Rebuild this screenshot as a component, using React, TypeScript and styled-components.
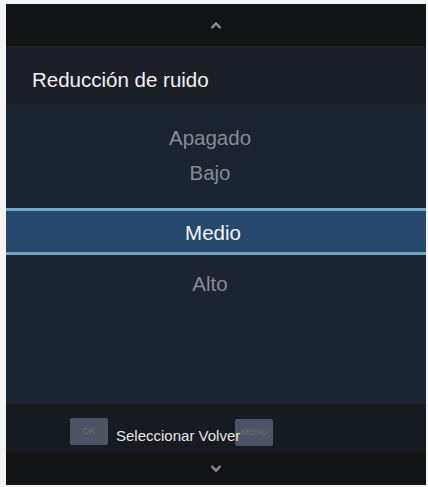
import * as React from "react"
import styled, { createGlobalStyle } from "styled-components"

const Global = createGlobalStyle`
    html, body {
        margin: 0;
        padding: 0;
        background: #f4f4f4;
    }
    body {
        font-family: "Liberation Sans", Arial, sans-serif;
    }
`

const Screen = styled.div`
    width: 420px;
    height: 481px;
    margin: 4px 0 0 6px;
    display: flex;
    flex-direction: column;
    background: #1b2230;
    overflow: hidden;
`

const ArrowBar = styled.div<{ $h: number }>`
    height: ${p => p.$h}px;
    flex: none;
    background: #121315;
    display: flex;
    align-items: center;
    justify-content: center;
`

const Header = styled.div`
    height: 58px;
    flex: none;
    background: #1b1f27;
    display: flex;
    align-items: center;
    padding: 10px 0 0 26px;
    box-sizing: border-box;
    color: #f2f2f2;
    font-size: 20.5px;
`

const List = styled.div`
    flex: 1;
    display: flex;
    flex-direction: column;
    padding-top: 18px;
    background: linear-gradient(#1b2230, #1c2331);
`

const Option = styled.div<{ $h: number; $selected?: boolean }>`
    height: ${p => p.$h}px;
    flex: none;
    display: flex;
    align-items: center;
    justify-content: center;
    padding-right: 12px;
    font-size: 20.5px;
    color: ${p => (p.$selected ? "#f4f6f8" : "#868c95")};
    ${p =>
        p.$selected &&
        `
        background: #27486d;
        border-top: 3px solid #6ba9c9;
        border-bottom: 3px solid #6ba9c9;
        box-sizing: border-box;
        padding-top: 3px;
        padding-right: 6px;
    `}
`

const Footer = styled.div`
    height: 48px;
    flex: none;
    background: #161a21;
    display: flex;
    align-items: center;
    padding-left: 64px;
    padding-top: 6px;
    box-sizing: border-box;
`

const Key = styled.div`
    width: 38px;
    height: 27px;
    background: #4c5463;
    border-radius: 2px;
    color: #626a78;
    font-size: 9px;
    display: flex;
    align-items: center;
    justify-content: center;
    flex: none;
`

const FooterText = styled.span`
    color: #e8e8e8;
    font-size: 15px;
    margin: 8px 0 0 8px;
    position: relative;
    z-index: 1;
    white-space: nowrap;
`

const MenuKey = styled(Key)`
    margin-left: -5px;
    margin-top: 2px;
`

const Chevron: React.FC<{ up?: boolean }> = ({ up }) => (
    <svg width="12" height="8" viewBox="0 0 12 8">
        <path
            d={up ? "M1.5 7 L6 2.5 L10.5 7" : "M1.5 1 L6 5.5 L10.5 1"}
            fill="none"
            stroke="#8c8f94"
            strokeWidth="2.4"
        />
    </svg>
)

export default function App() {
    return (
        <>
            <Global />
            <Screen>
                <ArrowBar $h={42}>
                    <Chevron up />
                </ArrowBar>
                <Header>Reducción de ruido</Header>
                <List>
                    <Option $h={32}>Apagado</Option>
                    <Option $h={38}>Bajo</Option>
                    <Option $h={16} />
                    <Option $h={47} $selected>
                        Medio
                    </Option>
                    <Option $h={57}>Alto</Option>
                </List>
                <Footer>
                    <Key>OK</Key>
                    <FooterText>Seleccionar Volver</FooterText>
                    <MenuKey>MENU</MenuKey>
                </Footer>
                <ArrowBar $h={33}>
                    <Chevron />
                </ArrowBar>
            </Screen>
        </>
    )
}
